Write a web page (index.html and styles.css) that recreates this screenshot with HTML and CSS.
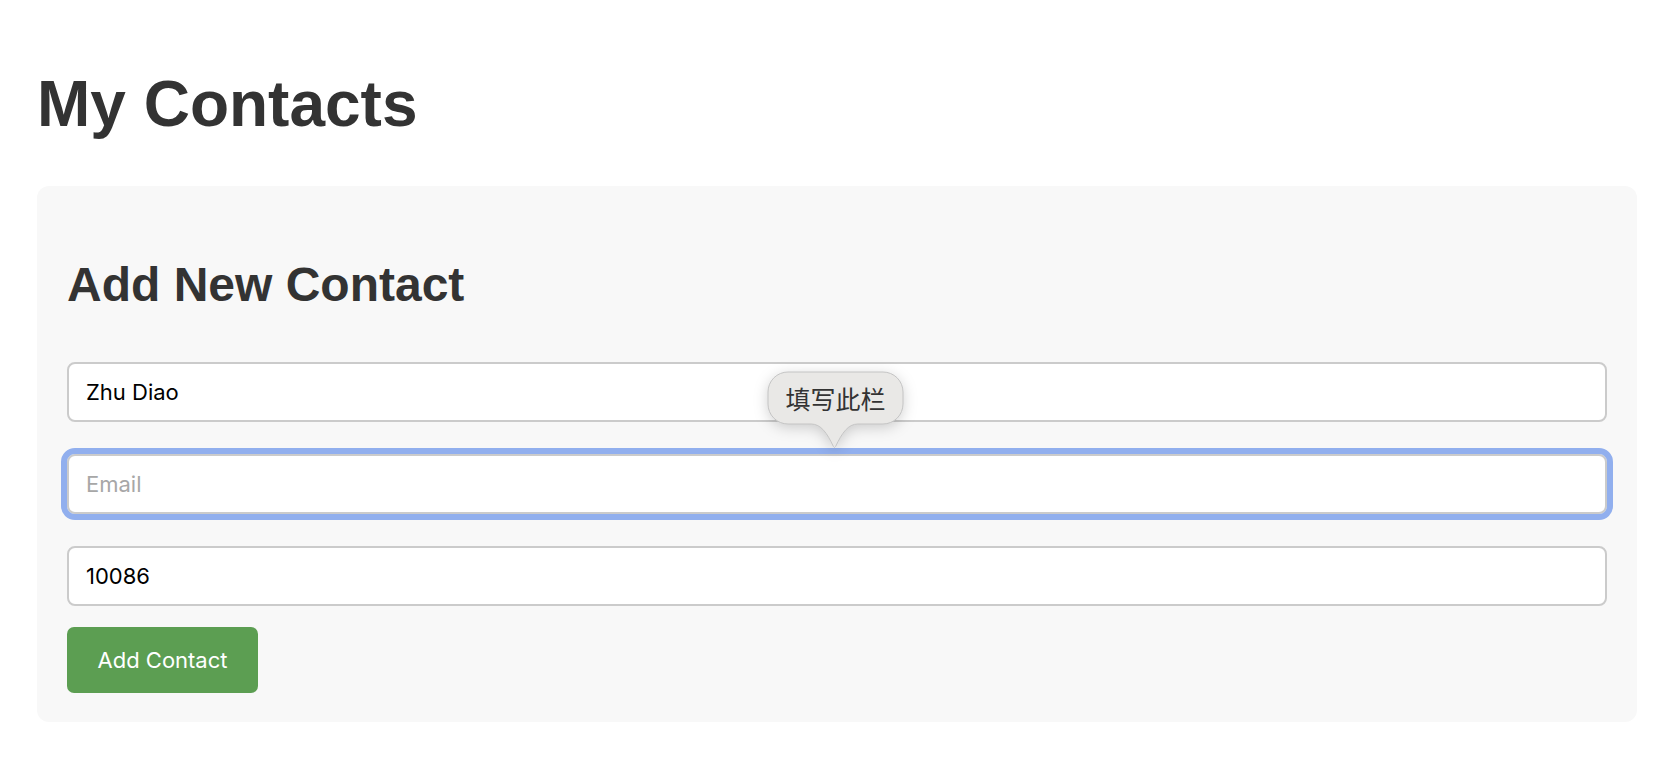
FILE: index.html
```html
<!DOCTYPE html>
<html lang="en">
<head>
<meta charset="utf-8">
<title>My Contacts</title>
<link rel="stylesheet" href="styles.css">
</head>
<body>
<div class="page">
  <h1 class="title">My Contacts</h1>
  <section class="card">
    <h2 class="card-title">Add New Contact</h2>
    <form class="contact-form">
      <input class="field" type="text" value="Zhu Diao">
      <div class="field-wrap">
        <input class="field field-focus" type="email" placeholder="Email">
        <div class="tooltip">
          <svg class="tooltip-shape" width="137" height="80" viewBox="0 0 137 80">
            <path d="M21,1 H116 A20,20 0 0 1 136,21 V33 A20,20 0 0 1 116,53 H91 C81,53 75,62 68.6,75.5 Q67.5,77.6 66.4,75.5 C60,62 54,53 44,53 H21 A20,20 0 0 1 1,33 V21 A20,20 0 0 1 21,1 Z" fill="#e9e8e6" stroke="#c4c4c4" stroke-width="1"/>
          </svg>
          <span class="tooltip-text">填写此栏</span>
        </div>
      </div>
      <input class="field field-last" type="text" value="10086">
      <button class="btn" type="button">Add Contact</button>
    </form>
  </section>
</div>
</body>
</html>
```

FILE: styles.css
```css
html, body {
  margin: 0;
  padding: 0;
  background: #ffffff;
}

body {
  font-family: "Liberation Sans", Arial, sans-serif;
  color: #333333;
}

.page {
  padding: 0 29px 0 37px;
}

.title {
  margin: 67px 0 45px 0;
  font-size: 64px;
  line-height: 74px;
  font-weight: 700;
  color: #333333;
}

.card {
  background: #f8f8f8;
  border-radius: 12px;
  padding: 30px 30px 29px 30px;
}

.card-title {
  margin: 41px 0 50px 0;
  font-size: 48px;
  line-height: 55px;
  font-weight: 700;
  color: #333333;
}

.contact-form {
  display: flex;
  flex-direction: column;
  align-items: flex-start;
}

.field-wrap {
  position: relative;
  width: 100%;
  margin-bottom: 32px;
}

.field {
  display: block;
  box-sizing: border-box;
  width: 100%;
  height: 60px;
  margin: 0 0 32px 0;
  padding: 0 17px;
  border: 2px solid #cbcbcb;
  border-radius: 8px;
  background: #ffffff;
  font-family: "Inter", "Liberation Sans", sans-serif;
  font-size: 22px;
  color: #000000;
}

.field::placeholder {
  color: #a7a7a7;
}

.field-wrap .field {
  margin-bottom: 0;
}

.field-focus {
  outline: 6px solid #91afee;
  outline-offset: 0;
}

.field-last {
  margin-bottom: 21px;
}

.btn {
  width: 191px;
  height: 66px;
  border: none;
  border-radius: 7px;
  background: #5c9e52;
  color: #ffffff;
  font-family: "Inter", "Liberation Sans", sans-serif;
  font-size: 22px;
  padding: 0;
}

.tooltip {
  position: absolute;
  top: -83px;
  left: 700px;
  width: 137px;
  height: 80px;
  z-index: 5;
}

.tooltip-shape {
  display: block;
  filter: drop-shadow(0 3px 7px rgba(0, 0, 0, 0.18));
}

.tooltip-text {
  position: absolute;
  left: 0;
  top: 1px;
  width: 137px;
  height: 53px;
  line-height: 53px;
  text-align: center;
  font-family: "Noto Sans CJK SC", sans-serif;
  font-size: 25px;
  color: #333333;
}
```
